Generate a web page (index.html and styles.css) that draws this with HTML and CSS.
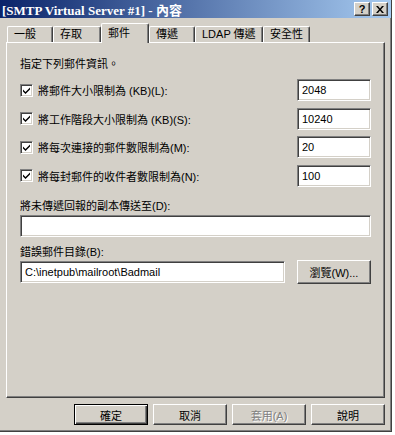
FILE: index.html
```html
<!DOCTYPE html>
<html lang="zh-TW">
<head>
    <meta charset="UTF-8">
    <title>[SMTP Virtual Server #1] - 內容</title>
    <link rel="stylesheet" href="styles.css">
</head>
<body>
    <div class="window">
        <div class="title-bar">
            <span class="title-text">[SMTP Virtual Server #1] - 內容</span>
            <div class="title-buttons">
                <span class="title-btn help">?</span>
                <span class="title-btn">
                    <svg width="8" height="7" viewBox="0 0 8 7"><path d="M0 0h2l2 2.5L6 0h2L5 3.5 8 7H6L4 4.5 2 7H0l3-3.5z" fill="#000"/></svg>
                </span>
            </div>
        </div>

        <div class="tabs">
            <div class="tab w46">一般</div>
            <div class="tab w48">存取</div>
            <div class="tab tab-active">郵件</div>
            <div class="tab w46">傳遞</div>
            <div class="tab w68">LDAP 傳遞</div>
            <div class="tab w47">安全性</div>
        </div>

        <div class="panel">
            <p class="intro">指定下列郵件資訊。</p>

            <div class="limits">
                <div class="limit-row">
                    <label class="check-label"><span class="checkbox"><svg width="7" height="7" viewBox="0 0 7 7"><path d="M0 2.5l2.5 2.5L7 0.5V2.5L2.5 7 0 4.5z" fill="#000"/></svg></span>將郵件大小限制為 (KB)(L):</label>
                    <input class="field field-num" type="text" value="2048">
                </div>
                <div class="limit-row">
                    <label class="check-label"><span class="checkbox"><svg width="7" height="7" viewBox="0 0 7 7"><path d="M0 2.5l2.5 2.5L7 0.5V2.5L2.5 7 0 4.5z" fill="#000"/></svg></span>將工作階段大小限制為 (KB)(S):</label>
                    <input class="field field-num" type="text" value="10240">
                </div>
                <div class="limit-row">
                    <label class="check-label"><span class="checkbox"><svg width="7" height="7" viewBox="0 0 7 7"><path d="M0 2.5l2.5 2.5L7 0.5V2.5L2.5 7 0 4.5z" fill="#000"/></svg></span>將每次連接的郵件數限制為(M):</label>
                    <input class="field field-num" type="text" value="20">
                </div>
                <div class="limit-row">
                    <label class="check-label"><span class="checkbox"><svg width="7" height="7" viewBox="0 0 7 7"><path d="M0 2.5l2.5 2.5L7 0.5V2.5L2.5 7 0 4.5z" fill="#000"/></svg></span>將每封郵件的收件者數限制為(N):</label>
                    <input class="field field-num" type="text" value="100">
                </div>
            </div>

            <p class="field-label first">將未傳遞回報的副本傳送至(D):</p>
            <input class="field field-wide" type="text" value="">

            <p class="field-label">錯誤郵件目錄(B):</p>
            <div class="browse-row">
                <input class="field field-path" type="text" value="C:\inetpub\mailroot\Badmail">
                <button class="btn btn-browse">瀏覽(W)...</button>
            </div>
        </div>

        <div class="actions">
            <button class="btn btn-default">確定</button>
            <button class="btn">取消</button>
            <button class="btn btn-disabled">套用(A)</button>
            <button class="btn">說明</button>
        </div>
    </div>
</body>
</html>
```

FILE: styles.css
```css
* {
    margin: 0;
    padding: 0;
    box-sizing: border-box;
}

body {
    background: #ffffff;
    font-family: 'Liberation Sans', 'Noto Sans CJK TC', sans-serif;
    font-size: 11px;
    color: #000;
}

.window {
    width: 392px;
    height: 432px;
    background: #d4d0c8;
    border-right: 1px solid #404040;
    border-bottom: 1px solid #404040;
    box-shadow: inset -1px -1px 0 #808080;
}

/* title bar */
.title-bar {
    height: 18px;
    display: flex;
    align-items: center;
    justify-content: space-between;
    padding: 0 3px 0 2px;
    background: linear-gradient(to right, #0a246a, #a6caf0);
}

.title-text {
    color: #fff;
    font-family: 'Liberation Serif', 'Noto Sans CJK TC', serif;
    font-weight: bold;
    font-size: 13px;
    white-space: nowrap;
}

.title-buttons {
    display: flex;
    gap: 2px;
}

.title-btn {
    width: 16px;
    height: 14px;
    display: flex;
    align-items: center;
    justify-content: center;
    background: #d4d0c8;
    border: 1px solid;
    border-color: #fff #404040 #404040 #fff;
    box-shadow: inset -1px -1px 0 #808080;
    font-weight: bold;
    font-size: 11px;
    line-height: 1;
}

/* tabs */
.tabs {
    display: flex;
    align-items: flex-end;
    height: 19px;
    margin-top: 5px;
    padding-left: 7px;
}

.tab {
    height: 16px;
    padding: 0 6px;
    line-height: 15px;
    white-space: nowrap;
    border-top: 1px solid #fff;
    border-left: 1px solid #fff;
    border-right: 1px solid #404040;
    box-shadow: inset -1px 0 0 #808080;
    border-radius: 2px 2px 0 0;
}

.w46 { width: 46px; }
.w47 { width: 47px; }
.w48 { width: 48px; }
.w68 { width: 68px; }

.tab-active {
    width: 48px;
    height: 20px;
    margin-bottom: -1px;
    line-height: 18px;
    position: relative;
    z-index: 1;
    background: #d4d0c8;
}

/* tab page */
.panel {
    width: 379px;
    height: 356px;
    margin-left: 6px;
    padding: 14px 13px 0 13px;
    border: 1px solid;
    border-color: #fff #404040 #404040 #fff;
    box-shadow: inset -1px -1px 0 #808080;
}

.intro {
    line-height: 14px;
}

.limits {
    display: flex;
    flex-direction: column;
    gap: 6.5px;
    margin-top: 8px;
}

.limit-row {
    display: flex;
    align-items: center;
    justify-content: space-between;
    height: 22px;
}

.check-label {
    display: flex;
    align-items: center;
    gap: 5px;
}

.checkbox {
    width: 13px;
    height: 13px;
    display: flex;
    align-items: center;
    justify-content: center;
    background: #fff;
    border: 1px solid;
    border-color: #808080 #fff #fff #808080;
    box-shadow: inset 1px 1px 0 #404040, inset -1px -1px 0 #d4d0c8;
}

.field {
    height: 22px;
    padding: 0 4px;
    font: inherit;
    color: #000;
    background: #fff;
    border: 1px solid;
    border-color: #808080 #fff #fff #808080;
    box-shadow: inset 1px 1px 0 #404040, inset -1px -1px 0 #d4d0c8;
    outline: none;
}

.field-num {
    width: 74px;
}

.field-wide {
    display: block;
    width: 351px;
    margin-top: 2px;
}

.field-label {
    line-height: 14px;
    margin-top: 8px;
}

.field-label.first {
    margin-top: 12.5px;
}

.browse-row {
    display: flex;
    align-items: center;
    justify-content: space-between;
    margin-top: 1px;
}

.field-path {
    width: 265px;
}

/* buttons */
.btn {
    width: 74px;
    height: 21px;
    font: inherit;
    color: #000;
    background: #d4d0c8;
    border: 1px solid;
    border-color: #fff #404040 #404040 #fff;
    box-shadow: inset -1px -1px 0 #808080;
}

.btn-browse {
    height: 24px;
}

.btn-default {
    border-color: #000;
    box-shadow: inset 1px 1px 0 #fff, inset -1px -1px 0 #404040, inset -2px -2px 0 #808080;
}

.btn-disabled {
    color: #808080;
    text-shadow: 1px 1px 0 #fff;
}

.actions {
    display: flex;
    justify-content: flex-end;
    gap: 5px;
    margin-top: 6px;
    padding-right: 6px;
}
```
